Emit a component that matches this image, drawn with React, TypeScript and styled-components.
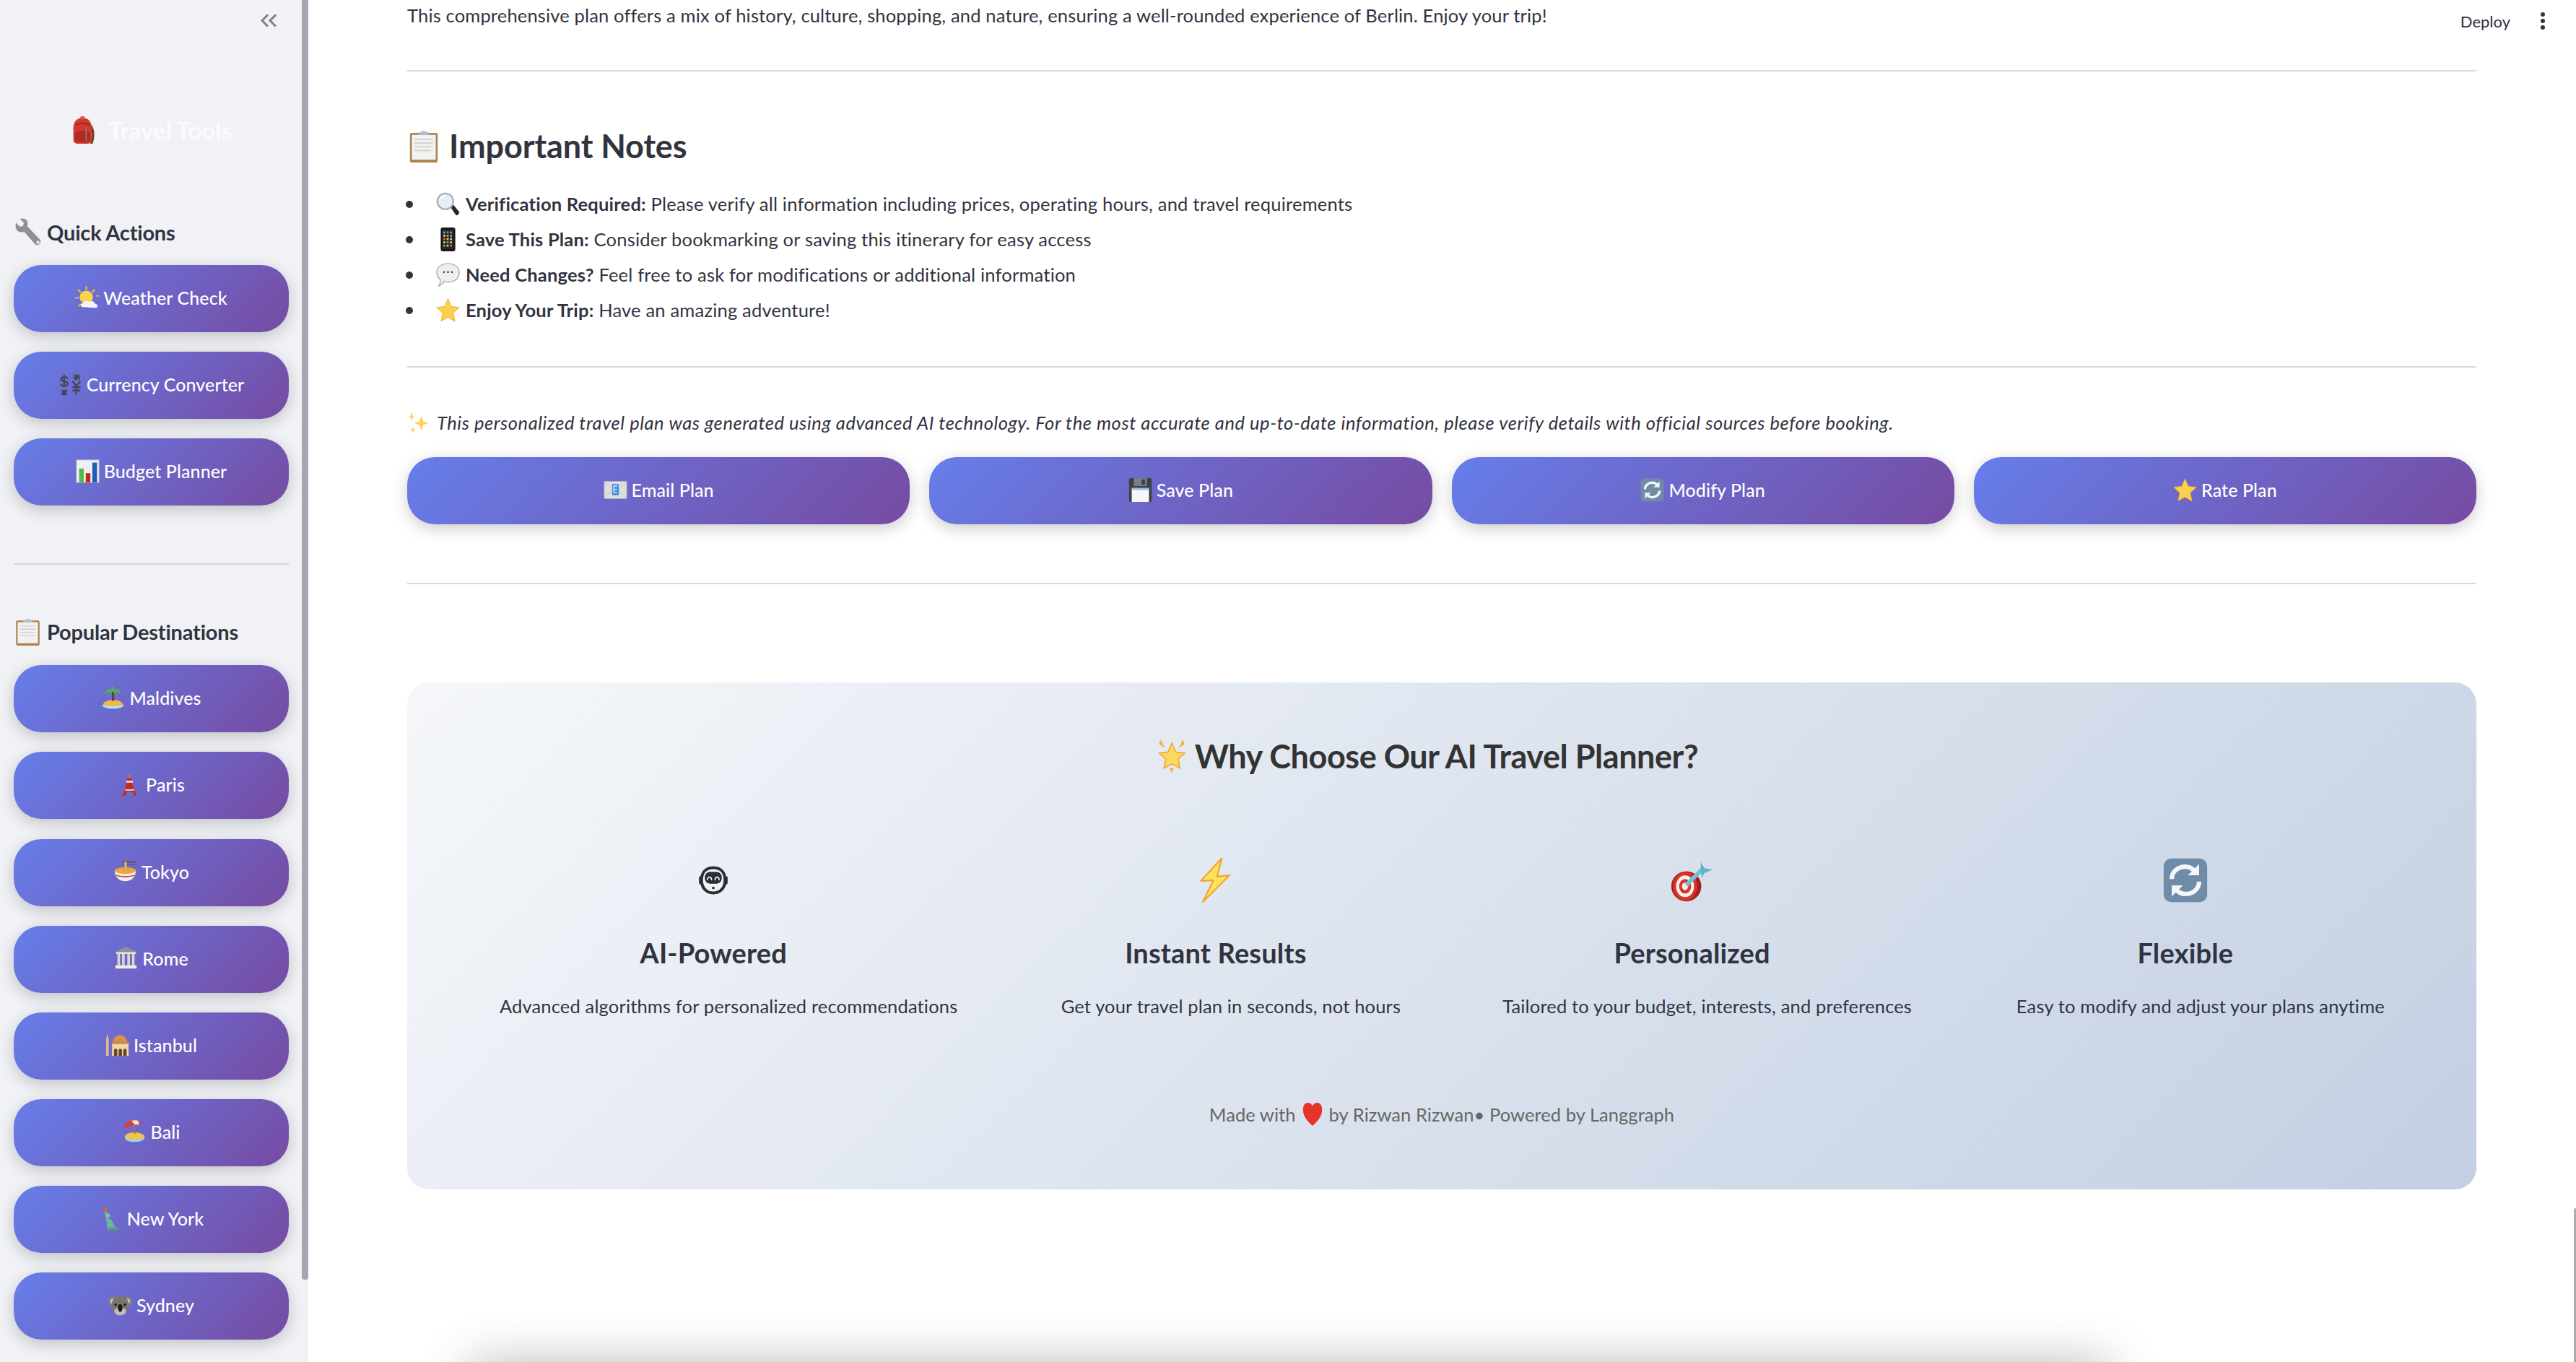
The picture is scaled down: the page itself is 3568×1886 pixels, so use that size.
import React from "react";
import styled, { createGlobalStyle } from "styled-components";

const GlobalStyle = createGlobalStyle`
  html, body { margin: 0; padding: 0; background: #fff; }
  body { font-family: Lato, "Noto Sans", "Liberation Sans", sans-serif; color: #31333f; }
  * { box-sizing: border-box; }
`;

const ART: Record<string, React.ReactNode> = {
  backpack: (<>
    <path d="M28 12c4 6 4 16 1 23h-3c3-7 3-15 0-21z" fill="#7a3b1f" />
    <path d="M5 30V16C5 7 10 3 16.500 3S28 7 28 16v14c0 3-2 5-5 5H10c-3 0-5-2-5-5z" fill="#cf3a2e" />
    <path d="M7 24c0-3 3-5 9.500-5S26 21 26 24v6c0 2-1 3-3 3H10c-2 0-3-1-3-3z" fill="#b42a22" />
    <path d="M8 12c5-3 12-3 17 0" stroke="#96201a" strokeWidth="1.500" fill="none" />
    <path d="M21 14v18" stroke="#7d7f7a" strokeWidth="1.600" />
    <path d="M13 3c1-3 6-3 7 0z" fill="#e25a4c" />
  </>),
  wrench: (<>
    <path d="M3 6l5 5 4-1 1-4-5-5c5-2 10 1 10 6 0 1 0 2-1 3l16 17c2 2 2 4 0 6s-4 2-6 0L13 17c-1 1-3 1-4 1C4 18 1 12 3 6z" fill="#8e9096" />
    <circle cx="31" cy="31" r="2" fill="#eef0f4" />
  </>),
  weather: (<>
    <g stroke="#f3b431" strokeWidth="2.400" strokeLinecap="round"><path d="M17 1v4M5 6l3 3M29 6l-3 3M1 18h4M33 15h2M6 30l2-2" /></g>
    <circle cx="17" cy="17" r="10" fill="#fbd443" />
    <path d="M12 32c-4 0-5-6 0-6 1-4 7-5 10-2 2-2 8-1 8 3 5 0 5 6 1 6z" fill="#f4f6fa" />
  </>),
  currency: (<>
    <g stroke="#46474f" strokeWidth="2.600" fill="none">
      <path d="M14 9c-1-3-10-3-10 1 0 4 10 2 10 7 0 4-10 4-11 0M8.500 3v19" />
      <path d="M21 13l6 7 6-7M27 20v13M21 22h12M21 27h12" />
    </g>
    <path d="M22 3h10v9l-3-3-3 3-4-4 3-2zM5 34v-9l3 2 3-2 3 3-3 3 3 3z" fill="#46474f" />
  </>),
  chart: (<>
    <rect x="1" y="1" width="34" height="34" fill="#eef0f4" stroke="#b9bbc4" />
    <rect x="5" y="14" width="7" height="21" fill="#54b948" /><rect x="15" y="21" width="7" height="14" fill="#c2281c" /><rect x="25" y="5" width="7" height="30" fill="#1d5fb5" />
  </>),
  clipboard: (<>
    <rect x="3" y="4" width="30" height="32" rx="2" fill="#a9824d" />
    <rect x="5" y="6" width="26" height="27" fill="#f1f1f0" />
    <g stroke="#d0d0d0" strokeWidth="1.300"><path d="M8 11h20M8 15h20M8 19h20M8 23h18" /></g>
    <path d="M12 6l1-3h3l2-2 2 2h3l1 3z" fill="#b3bcc8" />
  </>),
  island: (<>
    <path d="M3 28c1-5 9-7 15-7s14 2 15 7c0 6-30 6-30 0z" fill="#f3b64a" />
    <path d="M1 28c5 3 29 3 34 0-1 8-33 8-34 0z" fill="#a7e8ec" />
    <path d="M16 22c1-5 1-9 0-13h3c1 4 1 8 1 13z" fill="#5d3f26" />
    <path d="M18 8C14 2 7 4 6 12c3-3 7-4 12-4zM18 8c4-6 11-4 12 4-3-3-7-4-12-4zM18 8c-3-3-2-6-1-8 2 1 4 5 1 8zM18 8c-4 0-6 3-6 7 2-3 4-5 6-7zM18 8c4 0 6 3 6 7-2-3-4-5-6-7z" fill="#4fb845" />
  </>),
  tower: (<>
    <path d="M18 0l2 8h-4z" fill="#9a8d7c" />
    <path d="M14.500 8h7l1 10 6 17h-3l-4-7h-7l-4 7H7l6-17z" fill="#c32c20" />
    <path d="M13 12h10v3H13zM11 25h14v2H11z" fill="#eadfd2" />
  </>),
  ramen: (<>
    <path d="M13 4h21" stroke="#6d584b" strokeWidth="2.200" /><path d="M13 8h21" stroke="#6d584b" strokeWidth="1.200" />
    <path d="M17 4h3v14h-3z" fill="#f0c94e" />
    <path d="M2 17h32c0 10-7 16-16 16S2 27 2 17z" fill="#f1eee9" />
    <ellipse cx="18" cy="17" rx="16" ry="5" fill="#eda544" />
    <path d="M4 24c8 3 20 3 28 0" stroke="#d0483a" strokeWidth="2" fill="none" />
  </>),
  temple: (<>
    <path d="M18 1L35 9H1z" fill="#8d8f94" />
    <rect x="3" y="9" width="30" height="3" fill="#e3e1da" />
    <g fill="#d8d5cc"><rect x="5" y="12" width="4" height="17" /><rect x="12" y="12" width="4" height="17" /><rect x="20" y="12" width="4" height="17" /><rect x="27" y="12" width="4" height="17" /></g>
    <rect x="2" y="29" width="32" height="5" fill="#eeece6" />
  </>),
  mosque: (<>
    <path d="M3 1l2 9v25H1V10z" fill="#e6b98d" />
    <path d="M22 3c7 2 11 6 11 11H11c0-5 4-9 11-11z" fill="#d8904d" />
    <rect x="9" y="14" width="27" height="3" fill="#c68a45" />
    <rect x="10" y="17" width="25" height="18" fill="#f0d6ae" />
    <g fill="#6a4326"><path d="M13 35v-8c0-4 5-4 5 0v8zM20 35v-8c0-4 5-4 5 0v8zM27 35v-8c0-4 5-4 5 0v8z" /></g>
  </>),
  beach: (<>
    <path d="M3 27c0-5 8-7 15-7s15 2 15 7c0 6-30 6-30 0z" fill="#f3c24e" />
    <path d="M3 28c5 3 25 3 30 0-1 8-29 8-30 0z" fill="#8fdbe4" />
    <path d="M16 6l3 16" stroke="#a9742f" strokeWidth="1.800" />
    <path d="M1 14C3 5 12-1 22 2c4 1 7 3 8 6-5-2-9-2-13 0-4 1-9 3-16 6z" fill="#e33d2d" />
    <path d="M13 2c4-1 8-1 10 0l2 6-7 0z" fill="#f7e7c4" />
  </>),
  statue: (<>
    <path d="M8 8h4l1 9c3 1 7 3 8 7l4 7 6 4H13L11 20z" fill="#6fb3a0" />
    <circle cx="14" cy="13" r="3" fill="#7fc2ad" />
    <path d="M7 1l5 0 0 7H8z" fill="#c96a38" />
    <rect x="14" y="31" width="16" height="4" fill="#5b9a8a" />
  </>),
  koala: (<>
    <circle cx="7" cy="12" r="7" fill="#8a8280" /><circle cx="29" cy="12" r="7" fill="#8a8280" />
    <circle cx="7" cy="12" r="3.500" fill="#d9cfc7" /><circle cx="29" cy="12" r="3.500" fill="#d9cfc7" />
    <ellipse cx="18" cy="18" rx="13" ry="15" fill="#7b7372" />
    <ellipse cx="18" cy="27" rx="9" ry="6" fill="#c8bdb5" />
    <circle cx="11" cy="17" r="1.700" fill="#111" /><circle cx="25" cy="17" r="1.700" fill="#111" />
    <ellipse cx="18" cy="22" rx="3.500" ry="6" fill="#1b1a1b" />
  </>),
  magnifier: (<>
    <path d="M22 23l4-4 9 11c1 2-3 6-5 5z" fill="#26272b" />
    <circle cx="14" cy="14" r="12" fill="#e6eef6" stroke="#a9adb5" strokeWidth="2.500" />
    <path d="M7 11c1-3 3-5 6-5" stroke="#fff" strokeWidth="2" fill="none" />
  </>),
  phone: (<>
    <rect x="7" y="0" width="22" height="36" rx="3.500" fill="#17181b" />
    <rect x="9" y="3" width="18" height="30" fill="#25262c" />
    <g fill="#4bb6e8"><rect x="11" y="6" width="3" height="3" /><rect x="21" y="11" width="3" height="3" /><rect x="16" y="21" width="3" height="3" /></g>
    <g fill="#e95a4e"><rect x="16" y="6" width="3" height="3" /><rect x="11" y="16" width="3" height="3" /><rect x="21" y="26" width="3" height="3" /></g>
    <g fill="#65c45b"><rect x="21" y="6" width="3" height="3" /><rect x="16" y="11" width="3" height="3" /><rect x="11" y="26" width="3" height="3" /></g>
    <g fill="#f2c63f"><rect x="11" y="11" width="3" height="3" /><rect x="21" y="16" width="3" height="3" /><rect x="16" y="16" width="3" height="3" /><rect x="11" y="21" width="3" height="3" /><rect x="21" y="21" width="3" height="3" /><rect x="16" y="26" width="3" height="3" /></g>
  </>),
  speech: (<>
    <path d="M18 1c10 0 17 6 17 14s-7 14-17 14c-2 0-4 0-6-1-2 3-4 6-8 7 2-3 3-6 2-10C3 22 1 19 1 15 1 7 8 1 18 1z" fill="#eceef1" stroke="#a8aab0" strokeWidth="1.500" />
    <g fill="#44464d"><circle cx="12" cy="14" r="1.500" /><circle cx="18" cy="14" r="1.500" /><circle cx="24" cy="14" r="1.500" /></g>
  </>),
  star: (<path d="M18 1l5 11.500 12 1.300-9 8.500 2.500 12.700L18 28.500 7.500 34.500 10 22.300 1 13.800l12-1.300z" fill="#fbd04c" stroke="#f0a92e" strokeWidth="1" />),
  glow: (<>
    <path d="M18 4l4.500 9.500 9.500 1.200-7 6.600 1.900 9.700L18 26.500 9.600 31l1.900-9.700-7-6.600 9.500-1.200z" fill="#fcd95c" stroke="#eea52b" strokeWidth="1.200" />
    <path d="M15.500 31h5L18 36zM6 0l4.500 9L4 5zM30 0l-4.500 9L32 5z" fill="#f1b53c" />
  </>),
  sparkles: (<>
    <path d="M22 8l3 8 8 3-8 3-3 9-3-9-8-3 8-3z" fill="#fcd357" />
    <path d="M7 1l1.500 6 3 2-3 2L7 17l-1.500-6-3-2 3-2z" fill="#fcd357" />
    <path d="M9 24l1.200 4 2.800 1.500-2.800 1.500L9 35l-1.200-4L5 29.500 7.800 28z" fill="#fcd357" />
  </>),
  email: (<>
    <rect x="1" y="5" width="34" height="26" rx="1.500" fill="#dfdfdd" stroke="#b5b5b5" />
    <path d="M1 6l17 14L35 6M1 30l13-13M35 30L22 17" stroke="#bfbfbf" fill="none" />
    <rect x="13" y="9" width="10" height="17" rx="1" fill="#3f8fe0" />
    <path d="M15.500 12h5M15.500 17h5M15.500 22h5M15.500 12v10" stroke="#e8f2fc" strokeWidth="1.500" fill="none" />
  </>),
  floppy: (<>
    <path d="M1 2c0-1 1-2 2-2h30c1 0 2 1 2 2v32c0 1-1 2-2 2H3c-1 0-2-1-2-2z" fill="#3f4044" />
    <rect x="8" y="0" width="20" height="12" fill="#7c7d82" /><rect x="20" y="2" width="5" height="8" fill="#3f4044" />
    <rect x="5" y="15" width="26" height="21" fill="#f6f7f9" /><rect x="5" y="15" width="26" height="3" fill="#8fbbe6" />
  </>),
  refresh: (<>
    <rect x="0.500" y="0.500" width="35" height="35" rx="6" fill="#6e8ca8" />
    <g stroke="#f4f6f8" strokeWidth="3.600" fill="none"><path d="M7 17c0-6 5-10 11-10 3 0 5 1 7 3" /><path d="M29 19c0 6-5 10-11 10-3 0-5-1-7-3" /></g>
    <path d="M29 5v9h-9zM7 31v-9h9z" fill="#f4f6f8" />
  </>),
  robot: (<>
    <path d="M18 3c10 0 14 7 14 15 0 8-5 15-14 15S4 26 4 18C4 10 8 3 18 3z" fill="#f1f2f5" stroke="#2b2c35" strokeWidth="3.500" />
    <rect x="1" y="13" width="4" height="10" rx="2" fill="#2b2c35" /><rect x="31" y="13" width="4" height="10" rx="2" fill="#2b2c35" />
    <rect x="8" y="8" width="20" height="14" rx="6" fill="#2b2c35" />
    <path d="M11 18c0-5 5-5 5 0M20 18c0-5 5-5 5 0" stroke="#f1f2f5" strokeWidth="1.400" fill="none" />
    <circle cx="18" cy="27" r="1.600" fill="#2b2c35" />
  </>),
  bolt: (<path d="M23 0L6 18.500l10-.500-8.500 17.500L29 14l-10 1z" fill="#fde25a" stroke="#f0a12e" strokeWidth="1.200" strokeLinejoin="round" />),
  dart: (<>
    <circle cx="13" cy="23" r="12.500" fill="#a81e1a" />
    <ellipse cx="12" cy="23" rx="10" ry="12" fill="#d8322b" />
    <ellipse cx="12" cy="23" rx="7.500" ry="9" fill="#f3efe9" />
    <ellipse cx="12" cy="23" rx="5" ry="6" fill="#d8322b" />
    <ellipse cx="12" cy="23" rx="2.600" ry="3.200" fill="#f3efe9" />
    <path d="M13 22l13-13" stroke="#6fc3d4" strokeWidth="3.500" />
    <path d="M25 3l3 5 7 1-7 3-2 4-1-6z" fill="#5eb4c6" />
  </>),
  heart: (<path d="M18 35C8 26 4 19 4 11 4 5 7 1 11 1c3 0 6 2 7 5 1-3 4-5 7-5 4 0 7 4 7 10 0 8-4 15-14 24z" fill="#e5352b" />),
};

const EmojiSvg = styled.svg<{ $size: number }>`
  width: ${(p) => p.$size}px;
  height: ${(p) => p.$size}px;
  flex: none;
  display: block;
`;

const Emoji = ({ name, size = 33 }: { name: string; size?: number }) => (
  <EmojiSvg viewBox="0 0 36 36" $size={size} aria-hidden="true">
    {ART[name]}
  </EmojiSvg>
);

const Page = styled.div`
  position: relative;
  display: flex;
  width: 3568px;
  height: 1886px;
  overflow: hidden;
  background: #fff;
`;

const Sidebar = styled.aside`
  position: relative;
  flex: none;
  width: 427px;
  height: 100%;
  background: #f0f2f6;
  padding: 19px 27px 0 19px;
`;

const SidebarThumb = styled.div`
  position: absolute;
  top: 0;
  right: 0;
  width: 9px;
  height: 1772px;
  background: #a6a6b0;
  border-radius: 0 0 4px 4px;
`;

const CollapseRow = styled.div`
  display: flex;
  justify-content: flex-end;
  height: 19px;
  padding-right: 16px;
  color: #7d7f87;
`;

const Brand = styled.div`
  display: flex;
  align-items: center;
  justify-content: center;
  gap: 14px;
  height: 60px;
  margin-top: 112px;
  padding-right: 2px;
  font-size: 33px;
  font-weight: 700;
  color: #fbfbfd;
`;

const SideHeading = styled.h3<{ $top: number }>`
  display: flex;
  align-items: center;
  gap: 7px;
  height: 40px;
  margin: ${(p) => p.$top}px 0 0;
  font-size: 29px;
  font-weight: 700;
  letter-spacing: -0.2px;
  color: #31333f;
`;

const SideStack = styled.div<{ $top: number }>`
  display: flex;
  flex-direction: column;
  gap: 27.15px;
  margin-top: ${(p) => p.$top}px;
`;

const GradientButton = styled.button`
  display: flex;
  align-items: center;
  justify-content: center;
  gap: 6px;
  width: 100%;
  height: 93px;
  padding: 0 0 3px;
  border: 0;
  border-radius: 38px;
  background: linear-gradient(135deg, #667eea 0%, #764ba2 100%);
  box-shadow: 0 6px 22px rgba(0, 0, 0, 0.2);
  color: #fff;
  font-family: inherit;
  font-size: 25px;
  font-weight: 500;
  letter-spacing: 0.1px;
`;

const SideRule = styled.hr`
  height: 2px;
  margin: 80px 0 0;
  border: 0;
  background: #d5d7dc;
`;

const Main = styled.main`
  flex: 1;
  min-width: 0;
  padding: 3px 138px 0 137px;
  font-size: 25.5px;
  line-height: 36px;
  letter-spacing: 0.16px;
`;

const Paragraph = styled.p`
  margin: 0;
  white-space: nowrap;
`;

const Rule = styled.hr<{ $top: number }>`
  height: 2px;
  margin: ${(p) => p.$top}px 0 0;
  border: 0;
  background: #d9d9db;
`;

const NotesHeading = styled.h2`
  display: flex;
  align-items: center;
  gap: 12px;
  height: 60px;
  margin: 73px 0 0;
  font-size: 45px;
  font-weight: 700;
  letter-spacing: -0.1px;
`;

const NotesList = styled.ul`
  margin: 26px 0 0 -2px;
  padding: 0;
  list-style: none;
`;

const NotesItem = styled.li`
  display: flex;
  align-items: center;
  height: 49px;
  white-space: nowrap;
  letter-spacing: 0.2px;
`;

const Bullet = styled.span`
  flex: none;
  width: 10px;
  height: 10px;
  margin-right: 32px;
  border-radius: 50%;
  background: #31333f;
`;

const NoteText = styled.span`
  margin-left: 8px;
  padding-bottom: 2px;
  strong { font-weight: 700; }
`;

const Disclaimer = styled.p`
  display: flex;
  align-items: center;
  gap: 9px;
  margin: 58px 0 0;
  font-style: italic;
  white-space: nowrap;
  letter-spacing: 0.56px;
`;

const ActionRow = styled.div`
  display: grid;
  grid-template-columns: repeat(4, 1fr);
  gap: 27px;
  margin-top: 30px;
`;

const InfoCard = styled.section`
  height: 702px;
  margin-top: 136px;
  padding-top: 72px;
  border-radius: 30px;
  background: linear-gradient(135deg, #f5f7fa 0%, #c3cfe2 100%);
`;

const CardTitle = styled.h2`
  display: flex;
  align-items: center;
  justify-content: center;
  gap: 9px;
  height: 60px;
  margin: 0;
  padding-right: 42px;
  font-size: 45px;
  font-weight: 700;
  letter-spacing: -0.45px;
  color: #333;
`;

const Features = styled.div`
  display: flex;
  justify-content: space-around;
  margin-top: 110px;
  padding: 0 54px;
`;

const Feature = styled.div<{ $w: number }>`
  flex: none;
  width: ${(p) => p.$w}px;
  text-align: center;
`;

const FeatureIcon = styled.div`
  display: flex;
  align-items: center;
  justify-content: center;
  height: 64px;
  padding-right: 42px;
`;

const FeatureName = styled.h3`
  height: 50px;
  margin: 43px 0 0;
  padding-right: 42px;
  font-size: 38px;
  font-weight: 700;
  line-height: 50px;
`;

const FeatureText = styled.p`
  margin: 31px -20px 0;
  white-space: nowrap;
`;

const Credit = styled.p`
  display: flex;
  align-items: center;
  justify-content: center;
  gap: 6px;
  margin: 114px 0 0;
  color: #666;
  white-space: nowrap;
  letter-spacing: 0.06px;
`;

const HeaderActions = styled.div`
  position: absolute;
  top: 11px;
  right: 43px;
  display: flex;
  align-items: center;
  gap: 42px;
  height: 36px;
  font-size: 22px;
`;

const MenuDots = styled.span`
  display: flex;
  flex-direction: column;
  gap: 3px;
  i {
    display: block;
    width: 6px;
    height: 6px;
    border-radius: 50%;
    background: #31333f;
  }
`;

const MainThumb = styled.div`
  position: absolute;
  top: 1673px;
  right: 0;
  bottom: 0;
  width: 3px;
  border-radius: 3px 0 0 0;
  background: #a9a9b3;
`;

const BelowFoldShadow = styled.div`
  position: absolute;
  top: 1890px;
  left: 650px;
  width: 2270px;
  height: 80px;
  box-shadow: 0 0 70px rgba(0, 0, 0, 0.3);
`;

const quick = [
  ["weather", "Weather Check"],
  ["currency", "Currency Converter"],
  ["chart", "Budget Planner"],
];
const destinations = [
  ["island", "Maldives"],
  ["tower", "Paris"],
  ["ramen", "Tokyo"],
  ["temple", "Rome"],
  ["mosque", "Istanbul"],
  ["beach", "Bali"],
  ["statue", "New York"],
  ["koala", "Sydney"],
];
const notes = [
  ["magnifier", "Verification Required:", " Please verify all information including prices, operating hours, and travel requirements"],
  ["phone", "Save This Plan:", " Consider bookmarking or saving this itinerary for easy access"],
  ["speech", "Need Changes?", " Feel free to ask for modifications or additional information"],
  ["star", "Enjoy Your Trip:", " Have an amazing adventure!"],
];
const actions = [
  ["email", "Email Plan"],
  ["floppy", "Save Plan"],
  ["refresh", "Modify Plan"],
  ["star", "Rate Plan"],
];
const features: { icon: string; size: number; name: string; text: string; w: number }[] = [
  { icon: "robot", size: 42, name: "AI-Powered", text: "Advanced algorithms for personalized recommendations", w: 641 },
  { icon: "bolt", size: 62, name: "Instant Results", text: "Get your travel plan in seconds, not hours", w: 468 },
  { icon: "dart", size: 60, name: "Personalized", text: "Tailored to your budget, interests, and preferences", w: 569 },
  { icon: "refresh", size: 62, name: "Flexible", text: "Easy to modify and adjust your plans anytime", w: 515 },
];

export default function App() {
  return (
    <Page>
      <GlobalStyle />
      <Sidebar>
        <SidebarThumb />
        <CollapseRow>
          <svg width="24" height="19" viewBox="0 0 24 19" fill="none" stroke="currentColor" strokeWidth="3">
            <path d="M11 1.500L3 9.500l8 8M22 1.500l-8 8 8 8" />
          </svg>
        </CollapseRow>
        <Brand>
          <Emoji name="backpack" size={40} />
          Travel Tools
        </Brand>
        <SideHeading $top={91}>
          <Emoji name="wrench" size={39} />
          Quick Actions
        </SideHeading>
        <SideStack $top={26}>
          {quick.map(([icon, label]) => (
            <GradientButton key={label}>
              <Emoji name={icon} />
              {label}
            </GradientButton>
          ))}
        </SideStack>
        <SideRule />
        <SideHeading $top={72}>
          <Emoji name="clipboard" size={39} />
          Popular Destinations
        </SideHeading>
        <SideStack $top={27}>
          {destinations.map(([icon, label]) => (
            <GradientButton key={label}>
              <Emoji name={icon} />
              {label}
            </GradientButton>
          ))}
        </SideStack>
      </Sidebar>

      <Main>
        <Paragraph>
          This comprehensive plan offers a mix of history, culture, shopping, and nature, ensuring a well-rounded experience of Berlin. Enjoy your trip!
        </Paragraph>
        <Rule $top={58} />
        <NotesHeading>
          <Emoji name="clipboard" size={46} />
          Important Notes
        </NotesHeading>
        <NotesList>
          {notes.map(([icon, lead, rest]) => (
            <NotesItem key={lead}>
              <Bullet />
              <Emoji name={icon} />
              <NoteText>
                <strong>{lead}</strong>
                {rest}
              </NoteText>
            </NotesItem>
          ))}
        </NotesList>
        <Rule $top={53} />
        <Disclaimer>
          <Emoji name="sparkles" size={32} />
          This personalized travel plan was generated using advanced AI technology. For the most accurate and up-to-date information, please verify details with official sources before booking.
        </Disclaimer>
        <ActionRow>
          {actions.map(([icon, label]) => (
            <GradientButton key={label}>
              <Emoji name={icon} />
              {label}
            </GradientButton>
          ))}
        </ActionRow>
        <Rule $top={81} />
        <InfoCard>
          <CardTitle>
            <Emoji name="glow" size={46} />
            Why Choose Our AI Travel Planner?
          </CardTitle>
          <Features>
            {features.map((f) => (
              <Feature key={f.name} $w={f.w}>
                <FeatureIcon>
                  <Emoji name={f.icon} size={f.size} />
                </FeatureIcon>
                <FeatureName>{f.name}</FeatureName>
                <FeatureText>{f.text}</FeatureText>
              </Feature>
            ))}
          </Features>
          <Credit>
            Made with
            <Emoji name="heart" size={34} />
            by Rizwan Rizwan• Powered by Langgraph
          </Credit>
        </InfoCard>
      </Main>

      <HeaderActions>
        Deploy
        <MenuDots>
          <i />
          <i />
          <i />
        </MenuDots>
      </HeaderActions>
      <MainThumb />
      <BelowFoldShadow />
    </Page>
  );
}
